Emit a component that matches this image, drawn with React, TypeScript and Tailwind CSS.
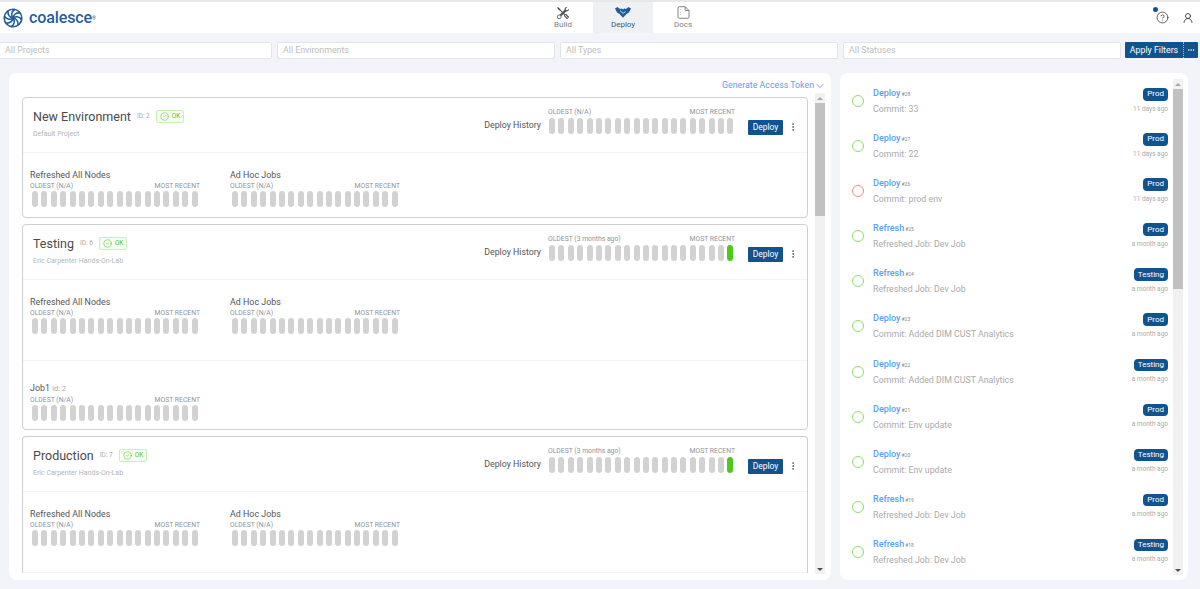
import React from "react";
import { ChevronDown, MoreVertical, CheckCircle2, CircleHelp, UserRound, Ellipsis } from "lucide-react";
import { BsTools } from "react-icons/bs";

const FONT = "font-['Roboto','Liberation_Sans',sans-serif]";

function Logo() {
  const arms = [0, 45, 90, 135, 180, 225, 270, 315];
  return (
    <div className="flex items-center gap-[6px]">
      <svg width="20" height="20" viewBox="0 0 20 20" fill="none" stroke="#1f5f99" strokeLinecap="round">
        <circle cx="10" cy="10" r="8.8" strokeWidth="1.6" />
        {arms.map((a) => (
          <path key={a} d="M10 10 C10.5 7 13 4.5 17 5" strokeWidth="1.7" transform={`rotate(${a} 10 10)`} />
        ))}
      </svg>
      <span className="text-[16px] font-medium leading-none tracking-[-0.1px] text-[#1f5f99]">
        coalesce<sup className="text-[5px]">®</sup>
      </span>
    </div>
  );
}

function Ticks({ n = 20, green = false }: { n?: number; green?: boolean }) {
  return (
    <div className="flex gap-[3.4px]">
      {Array.from({ length: n }).map((_, i) => (
        <div key={i} className={`h-[15.5px] w-[6px] rounded-[3px] ${green && i === n - 1 ? "bg-[#4fc81c]" : "bg-[#d2d2d2]"}`} />
      ))}
    </div>
  );
}

function History({ label, id, oldest = "N/A" }: { label: string; id?: string; oldest?: string }) {
  return (
    <div className="w-[170px]">
      <div className="text-[8.9px] leading-[12px] text-[#555]">
        {label} {id && <span className="text-[7.5px] text-[#aaa]">{id}</span>}
      </div>
      <div className="mt-px flex justify-between text-[6.8px] leading-[9px] text-[#8f939c]">
        <span>OLDEST ({oldest})</span>
        <span>MOST RECENT</span>
      </div>
      <div className="pl-[2px]">
        <Ticks n={18} />
      </div>
    </div>
  );
}

function EnvHeader({ name, id, project, oldest, green }: { name: string; id: string; project: string; oldest: string; green?: boolean }) {
  return (
    <div className="flex h-[55px] items-start border-b border-[#f4f4f4] pl-[10px] pr-[9px]">
      <div className="pt-[10px]">
        <div className="flex items-center">
          <span className="text-[12.5px] leading-[17px] text-[#4a4a4a]">{name}</span>
          <span className="ml-[6px] text-[6.5px] text-[#aaa]">ID: {id}</span>
          <span className="ml-[6px] flex h-[13px] items-center gap-[3px] rounded-[2px] border border-[#c9f0b5] bg-[#f6fdf1] px-[3px] text-[6.5px] text-[#58c232]">
            <CheckCircle2 size={9} strokeWidth={1.4} />
            OK
          </span>
        </div>
        <div className="mt-[5px] text-[7px] leading-[9px] text-[#b5b5b5]">{project}</div>
      </div>
      <div className="ml-auto flex items-start">
        <span className="mr-[7px] mt-[21px] text-[8.8px] leading-[13px] text-[#555]">Deploy History</span>
        <div className="mt-[10px] w-[187px]">
          <div className="flex justify-between text-[6.8px] leading-[9px] text-[#8f939c]">
            <span>OLDEST ({oldest})</span>
            <span>MOST RECENT</span>
          </div>
          <div className="mt-px pl-[1px]">
            <Ticks n={20} green={green} />
          </div>
        </div>
        <button className="ml-[13px] mt-[22px] flex h-[15px] w-[35px] items-center justify-center rounded-[1px] bg-[#11538f] text-[8.5px] text-white">
          Deploy
        </button>
        <MoreVertical size={10} strokeWidth={2} className="ml-[5px] mt-[24px] text-[#555]" />
      </div>
    </div>
  );
}

function Card({ className = "", children }: { className?: string; children: React.ReactNode }) {
  return <div className={`shrink-0 rounded-[4px] border border-[#cfcfcf] bg-white ${className}`}>{children}</div>;
}

const activity: [string, string, string, string, string, boolean?][] = [
  ["Deploy", "#28", "Commit: 33", "Prod", "11 days ago"],
  ["Deploy", "#27", "Commit: 22", "Prod", "11 days ago"],
  ["Deploy", "#26", "Commit: prod env", "Prod", "11 days ago", true],
  ["Refresh", "#25", "Refreshed Job: Dev Job", "Prod", "a month ago"],
  ["Refresh", "#24", "Refreshed Job: Dev Job", "Testing", "a month ago"],
  ["Deploy", "#23", "Commit: Added DIM CUST Analytics", "Prod", "a month ago"],
  ["Deploy", "#22", "Commit: Added DIM CUST Analytics", "Testing", "a month ago"],
  ["Deploy", "#21", "Commit: Env update", "Prod", "a month ago"],
  ["Deploy", "#20", "Commit: Env update", "Testing", "a month ago"],
  ["Refresh", "#19", "Refreshed Job: Dev Job", "Prod", "a month ago"],
  ["Refresh", "#18", "Refreshed Job: Dev Job", "Testing", "a month ago"],
];

function Scrollbar({ thumb }: { thumb: string }) {
  return (
    <div className="flex w-[10px] shrink-0 flex-col bg-[#f1f1f1]">
      <div className="flex h-[10px] items-center justify-center">
        <div className="h-0 w-0 border-x-[3px] border-b-[3px] border-x-transparent border-b-[#a8a8a8]" />
      </div>
      <div className={`bg-[#c1c1c1] ${thumb}`} />
      <div className="flex-1" />
      <div className="flex h-[10px] items-center justify-center">
        <div className="h-0 w-0 border-x-[3px] border-t-[3px] border-x-transparent border-t-[#505050]" />
      </div>
    </div>
  );
}

function Filter({ label, className }: { label: string; className: string }) {
  return (
    <div className={`flex h-[17px] shrink-0 items-center rounded-[2px] border border-[#e3e4e8] bg-white px-[5px] pt-px text-[8.8px] text-[#bdbdbd] ${className}`}>
      {label}
    </div>
  );
}

function Nav({ label, active, icon }: { label: string; active?: boolean; icon: React.ReactNode }) {
  return (
    <div className={`flex h-[31px] w-[60px] flex-col items-center pt-[4px] text-[8px] leading-[10px] ${active ? "bg-[#eef0f3] text-[#2c5f8f]" : "text-[#808080]"}`}>
      <div className="flex h-[13px] items-center">{icon}</div>
      <span className="mt-[1px]">{label}</span>
    </div>
  );
}

export default function App() {
  return (
    <div className={`flex h-[589px] w-[1200px] flex-col overflow-hidden bg-[#f3f4f9] ${FONT}`}>
      <div className="h-[2px] bg-[#e8e8e8]" />
      <header className="flex h-[31px] shrink-0 items-center bg-white pl-[3px] pr-[6px]">
        <div className="w-[530px] shrink-0"><Logo /></div>
        <div className="flex items-center self-start">
          <Nav label="Build" icon={<BsTools size={12} className="text-[#555]" />} />
          <Nav
            label="Deploy"
            active
            icon={
              <svg width="16" height="11" viewBox="0 0 16 11" fill="#1f5f99">
                <path d="M0 1.5 L2.5 0 L5 2 L6.8 1.6 L8 2.6 L9.2 1.6 L11 2 L13.5 0 L16 1.5 L14 5.5 L11.5 7 L8 10.8 L4.5 7 L2 5.5 Z" />
                <path d="M5 3.6 L8 6.4 L10.5 4.6" fill="none" stroke="#eef0f3" strokeWidth="0.8" />
              </svg>
            }
          />
          <Nav
            label="Docs"
            icon={
              <svg width="13" height="13" viewBox="0 0 13 13" fill="none" stroke="#777" strokeWidth="0.9" strokeLinejoin="round">
                <path d="M2.5 0.7 H8.2 L12 4.5 V11 A1.3 1.3 0 0 1 10.7 12.3 H2.3 A1.3 1.3 0 0 1 1 11 V2.2 A1.5 1.5 0 0 1 2.5 0.7 Z" />
                <path d="M8.2 0.7 V4.5 H12" />
                <path d="M3.4 3.5 V3.9 M3.4 6 V6.4 M3.4 8.5 V8.9" strokeWidth="1" />
              </svg>
            }
          />
        </div>
        <div className="flex flex-1 items-center justify-end gap-[13px]">
          <div className="relative flex text-[#333]">
            <CircleHelp size={13} strokeWidth={1.4} />
            <span className="absolute -left-[3px] -top-[4px] h-[5px] w-[5px] rounded-full bg-[#11538f]" />
          </div>
          <UserRound size={12} strokeWidth={1.7} className="text-[#333]" />
        </div>
      </header>
      <div className="flex h-[40px] shrink-0 items-center gap-[5px] pb-[6px] pr-[2px]">
        <Filter label="All Projects" className="-ml-px w-[273px]" />
        <Filter label="All Environments" className="w-[278px]" />
        <Filter label="All Types" className="w-[278px]" />
        <Filter label="All Statuses" className="w-[278px]" />
        <div className="-ml-px flex h-[16px] shrink-0 items-center rounded-[1px] bg-[#11538f] text-white">
          <span className="w-[58px] text-center text-[8.8px] leading-[16px]">Apply Filters</span>
          <span className="flex h-full w-[15px] items-center justify-center border-l border-dotted border-[#9dbad6]">
            <Ellipsis size={8} />
          </span>
        </div>
      </div>
      <main className="flex min-h-0 pl-[9px] pr-[12px]">
        <section className="flex h-[507px] w-[822px] flex-col rounded-[8px] bg-white pl-[13px] pr-[6px] pt-[6px]">
          <div className="-mr-px flex h-[14px] shrink-0 items-center justify-end pb-px text-[8.8px] text-[#5f9bf0]">
            Generate Access Token
            <ChevronDown size={12} strokeWidth={1.6} className="text-[#4d8fe8]" />
          </div>
          <div className="flex h-[481px] shrink-0 gap-[7px]">
            <div className="flex min-w-0 flex-1 flex-col gap-[6px] overflow-hidden pt-[4px]">
              <Card>
                <EnvHeader name="New Environment" id="2" project="Default Project" oldest="N/A" />
                <div className="flex h-[64px] gap-[30px] pl-[7px] pt-[16px]">
                  <History label="Refreshed All Nodes" />
                  <History label="Ad Hoc Jobs" />
                </div>
              </Card>
              <Card>
                <EnvHeader name="Testing" id="6" project="Eric Carpenter Hands-On-Lab" oldest="3 months ago" green />
                <div className="flex h-[81px] gap-[30px] border-b border-[#f4f4f4] pl-[7px] pt-[16px]">
                  <History label="Refreshed All Nodes" />
                  <History label="Ad Hoc Jobs" />
                </div>
                <div className="h-[68px] pl-[7px] pt-[21px]">
                  <History label="Job1" id="id: 2" />
                </div>
              </Card>
              <Card className="rounded-b-none border-b-0">
                <EnvHeader name="Production" id="7" project="Eric Carpenter Hands-On-Lab" oldest="3 months ago" green />
                <div className="flex h-[81px] gap-[30px] border-b border-[#f4f4f4] pl-[7px] pt-[16px]">
                  <History label="Refreshed All Nodes" />
                  <History label="Ad Hoc Jobs" />
                </div>
              </Card>
            </div>
            <Scrollbar thumb="h-[113px]" />
          </div>
        </section>
        <aside className="ml-[9px] flex h-[507px] w-[348px] rounded-[8px] bg-white pb-[5px] pl-[12px] pr-[5px] pt-[6px]">
          <div className="flex min-w-0 flex-1 flex-col overflow-hidden pr-[5px]">
            {activity.map(([t, n, d, env, when, failed], i) => (
              <div key={i} className="flex h-[45.1px] shrink-0 items-start">
                <div className={`mt-[16px] h-[12px] w-[12px] shrink-0 rounded-full border-[1.2px] ${failed ? "border-[#e58d82]" : "border-[#8fdc6a]"}`} />
                <div className="ml-[9px] mt-[8px] min-w-0 flex-1">
                  <div className="text-[9px] font-medium leading-[12px] text-[#5a9ff5]">
                    {t}
                    <span className="ml-[1px] text-[5px] font-normal text-[#888]">{n}</span>
                  </div>
                  <div className="mt-[3px] text-[8.8px] leading-[12px] text-[#aaa]">{d}</div>
                </div>
                <div className="mt-[9px] flex flex-col items-end">
                  <span className="flex h-[12.5px] items-center rounded-[4px] bg-[#11538f] px-[4px] text-[8px] text-white">{env}</span>
                  <span className="mt-[4px] text-[6.5px] leading-[9px] text-[#aaa]">{when}</span>
                </div>
              </div>
            ))}
          </div>
          <Scrollbar thumb="h-[200px]" />
        </aside>
      </main>
    </div>
  );
}
